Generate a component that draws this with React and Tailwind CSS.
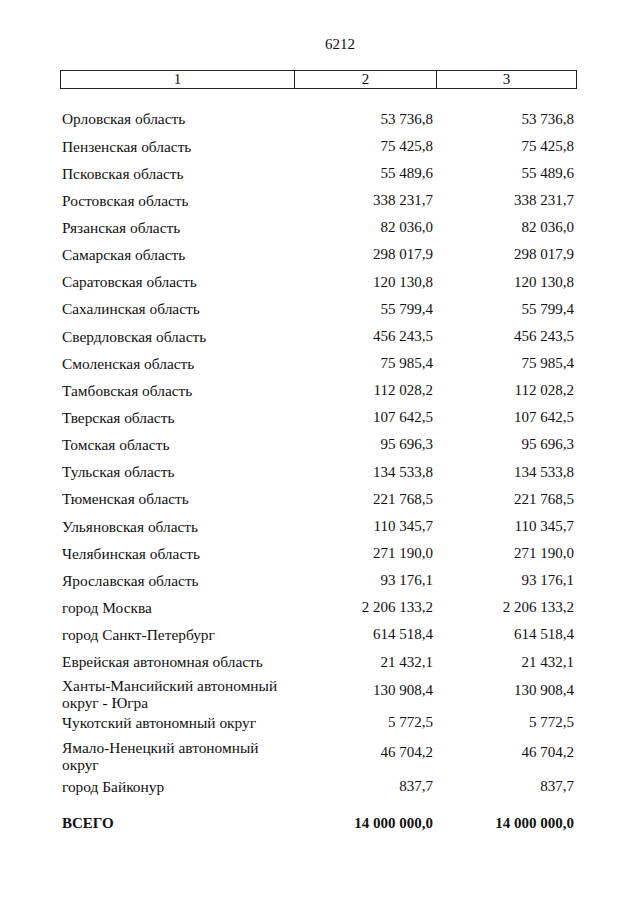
const rows = [
  ["Орловская область", "53 736,8"],
  ["Пензенская область", "75 425,8"],
  ["Псковская область", "55 489,6"],
  ["Ростовская область", "338 231,7"],
  ["Рязанская область", "82 036,0"],
  ["Самарская область", "298 017,9"],
  ["Саратовская область", "120 130,8"],
  ["Сахалинская область", "55 799,4"],
  ["Свердловская область", "456 243,5"],
  ["Смоленская область", "75 985,4"],
  ["Тамбовская область", "112 028,2"],
  ["Тверская область", "107 642,5"],
  ["Томская область", "95 696,3"],
  ["Тульская область", "134 533,8"],
  ["Тюменская область", "221 768,5"],
  ["Ульяновская область", "110 345,7"],
  ["Челябинская область", "271 190,0"],
  ["Ярославская область", "93 176,1"],
  ["город Москва", "2 206 133,2"],
  ["город Санкт-Петербург", "614 518,4"],
  ["Еврейская автономная область", "21 432,1"],
];

const Row = ({ label, value }) => (
  <div className="grid grid-cols-[233px_138px_141px] h-[27.15px] items-center">
    <div className="text-[15.4px]">{label}</div>
    <div className="text-right">{value}</div>
    <div className="text-right">{value}</div>
  </div>
);

const TwoLineRow = ({ lines, value, h, top, numTop }) => (
  <div className={`grid grid-cols-[233px_138px_141px] items-start ${h}`}>
    <div className={`text-[15.4px] leading-[17px] ${top}`}>
      {lines[0]}
      <br />
      {lines[1]}
    </div>
    <div className={`text-right leading-[17px] ${numTop}`}>{value}</div>
    <div className={`text-right leading-[17px] ${numTop}`}>{value}</div>
  </div>
);

export default function App() {
  return (
    <div className="w-[640px] h-[905px] bg-white text-[#111] font-[Liberation_Serif] text-[15px]">
      {/* Page number */}
      <div className="pt-[34px] pl-[40px] text-center leading-[20px]">6212</div>

      {/* Column header */}
      <div className="mt-[16px] ml-[60px] w-[517px] h-[19px] border border-[#222] grid grid-cols-[234px_142px_1fr] leading-[17px]">
        <div className="text-center border-r border-[#222]">1</div>
        <div className="text-center border-r border-[#222]">2</div>
        <div className="text-center">3</div>
      </div>

      {/* Data rows */}
      <div className="pl-[62px] mt-[16.4px]">
        {rows.map(([label, value]) => (
          <Row key={label} label={label} value={value} />
        ))}
        <TwoLineRow
          lines={["Ханты-Мансийский автономный", "округ - Югра"]}
          value="130 908,4"
          h="h-[34.4px]"
          top="pt-[2px]"
          numTop="pt-[7px]"
        />
        <div className="grid grid-cols-[233px_138px_141px] h-[26px] items-center">
          <div className="text-[15.4px]">Чукотский автономный округ</div>
          <div className="text-right">5 772,5</div>
          <div className="text-right">5 772,5</div>
        </div>
        <TwoLineRow
          lines={["Ямало-Ненецкий автономный", "округ"]}
          value="46 704,2"
          h="h-[37px]"
          top="pt-[3.5px]"
          numTop="pt-[8.5px]"
        />
        <div className="grid grid-cols-[233px_138px_141px] h-[28px] items-center">
          <div className="text-[15.4px]">город Байконур</div>
          <div className="text-right">837,7</div>
          <div className="text-right">837,7</div>
        </div>
        <div className="grid grid-cols-[233px_138px_141px] h-[28px] items-center mt-[9px] font-bold">
          <div>ВСЕГО</div>
          <div className="text-right">14 000 000,0</div>
          <div className="text-right">14 000 000,0</div>
        </div>
      </div>
    </div>
  );
}
